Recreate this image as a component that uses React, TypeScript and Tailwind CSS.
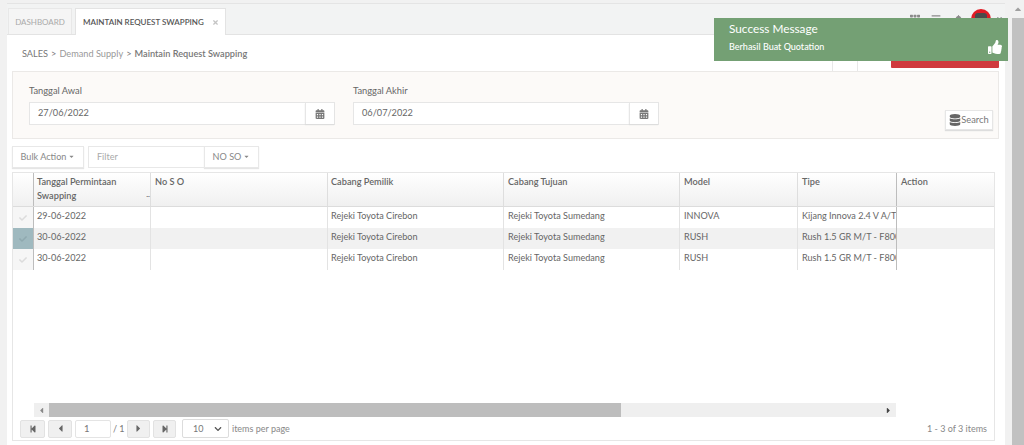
import React from "react";
import { FaCalendarAlt, FaDatabase, FaThumbsUp, FaCheck, FaStepBackward, FaStepForward, FaCaretLeft, FaCaretRight, FaCaretDown, FaCaretUp, FaTimes, FaChevronDown, FaBars, FaTh, FaBell } from "react-icons/fa";

const cols = [
  { t: "Tanggal Permintaan Swapping", w: "w-[117px]", p: "pl-[3px]" },
  { t: "No S O", w: "w-[177px]", p: "pl-[4px]" },
  { t: "Cabang Pemilik", w: "w-[176px]", p: "pl-[3px]" },
  { t: "Cabang Tujuan", w: "w-[176px]", p: "pl-[4px]" },
  { t: "Model", w: "w-[118px]", p: "pl-[4px]" },
  { t: "Tipe", w: "w-[99px]", p: "pl-[4px]" },
  { t: "Action", w: "w-[98px]", p: "pl-[4px]" },
];
const rows = [
  ["29-06-2022", "", "Rejeki Toyota Cirebon", "Rejeki Toyota Sumedang", "INNOVA", "Kijang Innova 2.4 V A/T - F800", ""],
  ["30-06-2022", "", "Rejeki Toyota Cirebon", "Rejeki Toyota Sumedang", "RUSH", "Rush 1.5 GR M/T - F800", ""],
  ["30-06-2022", "", "Rejeki Toyota Cirebon", "Rejeki Toyota Sumedang", "RUSH", "Rush 1.5 GR M/T - F800", ""],
];

function DateField({ label, value, width }: { label: string; value: string; width: string }) {
  return (
    <div className={width}>
      <div className="text-[9.3px] leading-[13px] text-[#666] mb-[5px]">{label}</div>
      <div className="flex h-[23px] bg-white border border-[#e6e6e6]">
        <div className="flex-1 pl-[8px] text-[9.2px] leading-[20px] text-[#666]">{value}</div>
        <div className="w-[29px] border-l border-[#e6e6e6] flex items-center justify-center shadow-[0_1px_1px_#ddd]">
          <FaCalendarAlt className="text-[10px] text-[#777]" />
        </div>
      </div>
    </div>
  );
}

function PagerBtn({ children, w }: { children: React.ReactNode; w: string }) {
  return (
    <div className={`${w} h-[18px] bg-[#f0f0f0] border border-[#e2e2e2] rounded-[2px] flex items-center justify-center text-[#666]`}>
      {children}
    </div>
  );
}

export default function App() {
  return (
    <div className="w-[1024px] h-[445px] overflow-hidden flex bg-[#f1f1f1] text-[#666] relative" style={{ fontFamily: "Lato, 'Open Sans', sans-serif" }}>
      <div className="w-[1012px] h-full flex flex-col pt-[3px] pl-[7px] pr-[7px]">
        <div className="bg-white h-full flex flex-col border-t border-[#e4e4e4]">
          {/* tabs */}
          <div className="h-[31px] shrink-0 bg-[#f2f3f3] border-b border-[#e3e3e3] flex items-end pl-[1px] gap-[3px]">
            <div className="w-[64px] h-[26px] border border-b-0 border-[#e8e8e8] bg-[#f5f5f5] flex items-center justify-center text-[8px] text-[#aaa]">DASHBOARD</div>
            <div className="w-[151px] h-[27px] -mb-px border border-b-0 border-[#e3e3e3] bg-white flex items-center pl-[7px] text-[8px] font-semibold text-[#555]">
              <span>MAINTAIN REQUEST SWAPPING</span>
              <FaTimes className="ml-[8px] text-[7px] text-[#c4c4c4]" />
            </div>
          </div>
          {/* breadcrumb */}
          <div className="h-[36px] shrink-0 relative flex items-center pt-[1px] pl-[15px] text-[9.2px] text-[#777]">
            <span>SALES</span>
            <span className="mx-[3px] text-[#777]">&gt;</span>
            <span className="text-[#999]">Demand Supply</span>
            <span className="mx-[3px] text-[#777]">&gt;</span>
            <span className="font-semibold text-[#777]">Maintain Request Swapping</span>
            <div className="absolute left-[825px] top-0 bottom-0 w-[26px] border-x border-[#e8e8e8] bg-white" />
            <div className="absolute left-[884px] bottom-[3px] w-[108px] h-[12px] bg-[#d03a3e] rounded-b-[1px]" />
          </div>
          {/* filter panel */}
          <div className="ml-[5px] mr-[6px] h-[68px] shrink-0 bg-[#fcfaf8] border border-[#ebe9e7] flex items-start pt-[12px] pl-[16px] gap-[18px] relative">
            <DateField label="Tanggal Awal" value="27/06/2022" width="w-[306px]" />
            <DateField label="Tanggal Akhir" value="06/07/2022" width="w-[306px]" />
            <div className="absolute right-[5px] bottom-[8px] w-[48px] h-[20px] bg-white border border-[#e6e6e6] shadow-[0_1px_1px_#ddd] flex items-center justify-center text-[9.3px] text-[#777]">
              <FaDatabase className="text-[12px] text-[#666]" />
              <span>Search</span>
            </div>
          </div>
          {/* toolbar */}
          <div className="ml-[5px] mt-[7px] h-[22px] shrink-0 flex text-[9.1px] leading-[18px]">
            <div className="w-[72px] border border-[#e8e8e8] shadow-[0_1px_1px_#e5e5e5] flex items-center justify-center text-[#888] gap-[2px] pb-[1px]">
              Bulk Action <FaCaretDown className="text-[7px]" />
            </div>
            <div className="w-[117px] ml-[4px] border border-[#e8e8e8] flex items-center pl-[8px] text-[#aaa] pb-[1px]">Filter</div>
            <div className="w-[55px] -ml-px border border-[#e8e8e8] shadow-[0_1px_1px_#e5e5e5] flex items-center justify-center text-[#888] gap-[2px] pb-[1px]">
              NO SO <FaCaretDown className="text-[7px]" />
            </div>
          </div>
          {/* grid */}
          <div className="ml-[5px] mr-[10px] mt-[4px] flex-1 border border-[#e6e6e6] flex flex-col min-h-0 mb-[4px]">
            <div className="h-[34px] shrink-0 flex bg-gradient-to-b from-white to-[#f0f0f0] border-b border-[#dcdcdc]">
              <div className="w-[21px] shrink-0 border-r border-[#bdbdbd]" />
              {cols.map((c, i) => (
                <div key={c.t} className={`${c.w} ${c.p} shrink-0 relative pr-[4px] pt-[2px] text-[9.2px] leading-[13.5px] font-semibold text-[#666] ${i < 6 ? "border-r" : ""} ${i === 5 ? "border-[#bdbdbd]" : "border-[#dedede]"}`}>
                  {c.t}
                  {i === 0 && <span className="absolute right-[0px] bottom-[8px] text-[8px] leading-[8px]">..</span>}
                </div>
              ))}
            </div>
            {rows.map((r, ri) => (
              <div key={ri} className={`h-[21px] shrink-0 flex text-[9.1px] leading-[18px] text-[#666] ${ri === 1 ? "bg-[#f1f1f1]" : "bg-white"}`}>
                <div className={`w-[21px] shrink-0 border-r border-[#bdbdbd] flex items-center justify-center ${ri === 1 ? "bg-[#9fb9bf] text-[#8fa9af]" : "bg-[#f6f6f6] text-[#dcdcdc]"}`}>
                  <FaCheck className="text-[8px]" />
                </div>
                {r.map((v, i) => (
                  <div key={i} className={`${cols[i].w} ${cols[i].p} shrink-0 overflow-hidden whitespace-nowrap ${i < 6 ? "border-r" : ""} ${i === 5 ? "border-[#bdbdbd]" : "border-[#e3e3e3]"}`}>{v}</div>
                ))}
              </div>
            ))}
            <div className="flex-1" />
            {/* horizontal scrollbar */}
            <div className="ml-[21px] w-[862px] h-[14px] shrink-0 bg-[#efefef] flex items-center">
              <div className="w-[15px] flex justify-center text-[#888]"><FaCaretLeft className="text-[9px]" /></div>
              <div className="w-[572px] h-full bg-[#bdbdbd]" />
              <div className="flex-1" />
              <div className="w-[15px] flex justify-center text-[#444]"><FaCaretRight className="text-[9px]" /></div>
            </div>
            {/* pager */}
            <div className="h-[23px] shrink-0 flex items-center pl-[7px] pr-[7px] text-[9px] text-[#888]">
              <PagerBtn w="w-[25px]"><FaStepBackward className="text-[8px]" /></PagerBtn>
              <PagerBtn w="w-[24px] ml-[3px]"><FaCaretLeft className="text-[11px]" /></PagerBtn>
              <div className="ml-[3px] w-[36px] h-[18px] border border-[#e4e4e4] rounded-[2px] bg-white pl-[8px] text-[9.5px] leading-[15px] text-[#777]">1</div>
              <span className="ml-[2px] w-[14px] text-[#777] whitespace-nowrap">/ 1</span>
              <PagerBtn w="w-[23px]"><FaCaretRight className="text-[11px]" /></PagerBtn>
              <PagerBtn w="w-[23px] ml-[3px]"><FaStepForward className="text-[8px]" /></PagerBtn>
              <div className="ml-[6px] w-[47px] h-[19px] border border-[#dcdcdc] rounded-[2px] bg-white flex items-center pl-[10px] pr-[6px] justify-between text-[#777]">
                <span>10</span>
                <FaChevronDown className="text-[8px] text-[#555]" />
              </div>
              <span className="ml-[3px]">items per page</span>
              <span className="ml-auto">1 - 3 of 3 items</span>
            </div>
          </div>
        </div>
      </div>
      {/* page scrollbar */}
      <div className="w-[12px] h-full flex flex-col bg-[#f1f1f1]">
        <div className="h-[18px] flex items-center justify-center text-[#a0a0a0]"><FaCaretUp className="text-[10px]" /></div>
        <div className="flex-1 bg-[#c1c1c1]" />
      </div>
      {/* header icons */}
      <div className="absolute top-[9px] left-[910px] flex items-center text-[#8a8a8a]">
        <FaTh className="text-[10px]" />
        <FaBars className="text-[10px] ml-[11px]" />
        <FaBell className="text-[9px] ml-[13px]" />
        <div className="ml-[8px] w-[20px] h-[20px] rounded-full bg-[#e01b24] flex items-start justify-center pt-[4px]"><div className="w-[12px] h-[8px] bg-[#4a4a4a] rounded-t-[3px]" /></div>
        <FaTimes className="text-[7px] ml-[5px]" />
      </div>
      {/* toast */}
      <div className="absolute left-[714px] top-[18px] w-[294px] h-[43px] bg-[#74a074] text-white pl-[15px] pt-[4px]">
        <div className="text-[11.8px] leading-[14px]">Success Message</div>
        <div className="text-[9px] leading-[12px] mt-[5px] font-medium">Berhasil Buat Quotation</div>
        <FaThumbsUp className="absolute right-[6px] bottom-[7px] text-[14px]" />
      </div>
    </div>
  );
}
